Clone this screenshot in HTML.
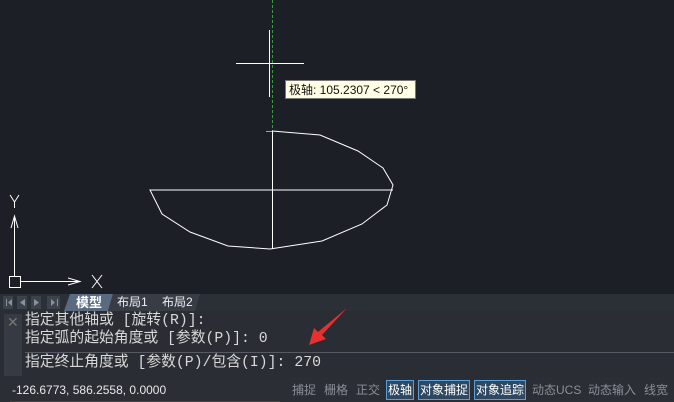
<!DOCTYPE html>
<html><head><meta charset="utf-8"><style>
body{margin:0;width:674px;height:402px;overflow:hidden;background:#1c1f25;font-family:"Liberation Sans","Noto Sans CJK SC",sans-serif;position:relative}
.a{position:absolute}
.cmd{font-family:"Liberation Mono","Noto Sans CJK SC",monospace;font-size:14.8px;color:#d8d8d8;white-space:pre;line-height:17px}
.sb{position:absolute;top:381px;font-size:12px;color:#8a8f97;height:18px;line-height:18px}
.on{border:1px solid #5aa0d8;background:#2f4862;color:#fff;padding:0 1px;top:380px}
</style></head><body>
<svg class="a" style="left:0;top:0" width="674" height="295">
<line x1="272.5" y1="0" x2="272.5" y2="131" stroke="#3c9a3c" stroke-dasharray="3,2"/>
<line x1="236" y1="63.5" x2="304" y2="63.5" stroke="#fff"/>
<line x1="269.5" y1="30" x2="269.5" y2="97" stroke="#fff"/>
<line x1="266" y1="131.5" x2="272" y2="131.5" stroke="#e0a020"/>
<polyline fill="none" stroke="#fff" stroke-width="1" points="272,131 320,135 358,151 383,168 393,185 387,205 362,224 322,241 270,249 228,246 190,232 162,214 150,190 393,190"/>
<line x1="272.5" y1="131" x2="272.5" y2="249" stroke="#fff"/>
<g stroke="#fff" fill="none">
<rect x="9.5" y="276.5" width="11" height="11"/>
<line x1="14.5" y1="276" x2="14.5" y2="217"/>
<polyline points="11,228 14.5,216 18,228"/>
<line x1="21" y1="281.5" x2="80" y2="281.5"/>
<polyline points="68,278 80,281.5 68,285"/>
<polyline points="10,195 14.5,202 19,195"/><line x1="14.5" y1="202" x2="14.5" y2="208"/>
<line x1="92" y1="275" x2="102" y2="288"/><line x1="102" y1="275" x2="92" y2="288"/>
</g>
</svg>
<div class="a" style="left:285px;top:80px;width:131px;height:19px;background:#ffffe6;border:1px solid #777;font-size:12px;line-height:19px;color:#111;padding-left:3px;box-sizing:border-box">极轴: 105.2307 &lt; 270°</div>
<div class="a" style="left:0;top:294px;width:674px;height:17px;background:#2b2f36"></div>
<svg class="a" style="left:0;top:294px" width="674" height="17">
<g fill="#8a929c"><rect x="3" y="2" width="10" height="13" fill="#3c434d"/><rect x="17" y="2" width="10" height="13" fill="#3c434d"/><rect x="31" y="2" width="10" height="13" fill="#3c434d"/><rect x="47" y="2" width="13" height="13" fill="#3c434d"/>
<path d="M6 5h1v7H6z M12 5v7l-4-3.5z"/><path d="M25 5v7l-5-3.5z"/><path d="M34 5v7l5-3.5z"/><path d="M51 5v7l4-3.5z M57 5h1v7h-1z"/></g>
<path d="M70 0H113L108 17H64Z" fill="#5a6a80"/>
<path d="M113 0H155L150 17H108Z" fill="#383d45"/>
<path d="M155 0H200L195 17H150Z" fill="#383d45"/>
</svg>
<div class="a" style="left:76px;top:294px;font-size:13px;font-weight:bold;color:#fff;line-height:17px">模型</div>
<div class="a" style="left:117px;top:294px;font-size:12px;color:#eee;line-height:17px">布局1</div>
<div class="a" style="left:162px;top:294px;font-size:12px;color:#eee;line-height:17px">布局2</div>
<div class="a" style="left:0;top:311px;width:674px;height:67px;background:#2a2d33"></div>
<div class="a" style="left:4px;top:314px;width:18px;height:62px;background:#363a42"></div>
<div class="a" style="left:7px;top:314px;color:#777;font-size:14px">✕</div>
<div class="a" style="left:25px;top:352px;width:649px;height:1px;background:#555a63"></div>
<div class="a cmd" style="left:25px;top:313px">指定其他轴或 [旋转(R)]:</div>
<div class="a cmd" style="left:25px;top:331px">指定弧的起始角度或 [参数(P)]: 0</div>
<div class="a cmd" style="left:25px;top:355px">指定终止角度或 [参数(P)/包含(I)]: 270</div>
<svg class="a" style="left:300px;top:300px" width="60" height="60">
<path d="M47 8 L18 32 L14 28 L9 45 L26 39 L22 35 Z" fill="#e83030"/>
</svg>
<div class="a" style="left:0;top:378px;width:674px;height:24px;background:#2b2e34"></div>
<div class="a" style="left:10px;top:401px;width:270px;height:1px;background:#444"></div>
<div class="sb" style="left:12px;color:#e8e8e8">-126.6773, 586.2558, 0.0000</div>
<div class="sb" style="left:292px">捕捉</div>
<div class="sb" style="left:324px">栅格</div>
<div class="sb" style="left:356px">正交</div>
<div class="sb on" style="left:386px">极轴</div>
<div class="sb on" style="left:418px">对象捕捉</div>
<div class="sb on" style="left:474px">对象追踪</div>
<div class="sb" style="left:532px">动态UCS</div>
<div class="sb" style="left:588px">动态输入</div>
<div class="sb" style="left:644px">线宽</div>
</body></html>
